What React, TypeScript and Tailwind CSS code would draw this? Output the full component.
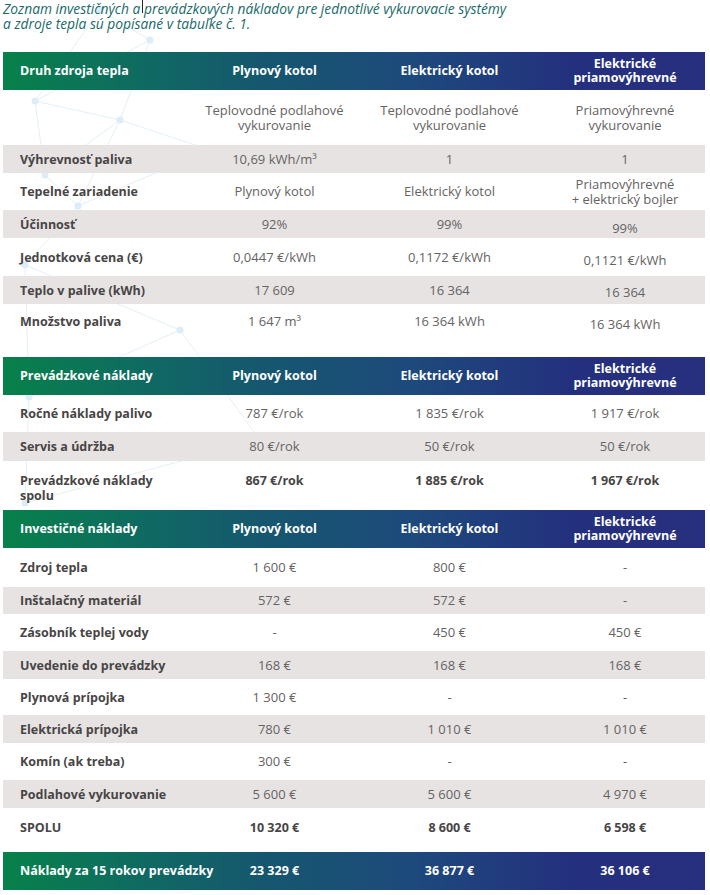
import React from "react";

type Row = {
  label: string;
  cells: string[];
  gray?: boolean;
  h: number;
  bold?: boolean;
  top?: boolean;
  offsets?: number[];
};

type Section = {
  title: string;
  headerMt?: number;
  rows: Row[];
};

const heads = ["Plynový kotol", "Elektrický kotol", "Elektrické\npriamovýhrevné"];

const sections: Section[] = [
  {
    title: "Druh zdroja tepla",
    rows: [
      {
        label: "",
        cells: [
          "Teplovodné podlahové\nvykurovanie",
          "Teplovodné podlahové\nvykurovanie",
          "Priamovýhrevné\nvykurovanie",
        ],
        h: 55,
      },
      { label: "Výhrevnosť paliva", cells: ["10,69 kWh/m³", "1", "1"], gray: true, h: 28 },
      {
        label: "Tepelné zariadenie",
        cells: ["Plynový kotol", "Elektrický kotol", "Priamovýhrevné\n+ elektrický bojler"],
        h: 37,
      },
      { label: "Účinnosť", cells: ["92%", "99%", "99%"], gray: true, h: 28, offsets: [0, 0, 4] },
      {
        label: "Jednotková cena (€)",
        cells: ["0,0447 €/kWh", "0,1172 €/kWh", "0,1121 €/kWh"],
        h: 38,
        offsets: [0, 0, 3],
      },
      { label: "Teplo v palive (kWh)", cells: ["17 609", "16 364", "16 364"], gray: true, h: 28, offsets: [0, 0, 2] },
      {
        label: "Množstvo paliva",
        cells: ["1 647 m³", "16 364 kWh", "16 364 kWh"],
        h: 34,
        offsets: [0, 0, 3],
      },
    ],
  },
  {
    title: "Prevádzkové náklady",
    headerMt: 19,
    rows: [
      { label: "Ročné náklady palivo", cells: ["787 €/rok", "1 835 €/rok", "1 917 €/rok"], h: 37 },
      { label: "Servis a údržba", cells: ["80 €/rok", "50 €/rok", "50 €/rok"], gray: true, h: 29 },
      {
        label: "Prevádzkové náklady\nspolu",
        cells: ["867 €/rok", "1 885 €/rok", "1 967 €/rok"],
        h: 49,
        bold: true,
        top: true,
      },
    ],
  },
  {
    title: "Investičné náklady",
    rows: [
      { label: "Zdroj tepla", cells: ["1 600 €", "800 €", "-"], h: 39 },
      { label: "Inštalačný materiál", cells: ["572 €", "572 €", "-"], gray: true, h: 27 },
      { label: "Zásobník teplej vody", cells: ["-", "450 €", "450 €"], h: 37 },
      { label: "Uvedenie do prevádzky", cells: ["168 €", "168 €", "168 €"], gray: true, h: 28 },
      { label: "Plynová prípojka", cells: ["1 300 €", "-", "-"], h: 36 },
      { label: "Elektrická prípojka", cells: ["780 €", "1 010 €", "1 010 €"], gray: true, h: 28 },
      { label: "Komín (ak treba)", cells: ["300 €", "-", "-"], h: 37 },
      { label: "Podlahové vykurovanie", cells: ["5 600 €", "5 600 €", "4 970 €"], gray: true, h: 28 },
      { label: "SPOLU", cells: ["10 320 €", "8 600 €", "6 598 €"], h: 44, bold: true, top: true },
    ],
  },
];

const grid = "grid grid-cols-[184px_175px_175px_168px]";
const headBg =
  "bg-[linear-gradient(90deg,#07814a_0%,#0f6a62_20%,#16566f_38%,#1d4a7c_58%,#242f7e_82%,#27307f_100%)]";

function HeaderRow({ title, cells, mt }: { title: string; cells: string[]; mt?: number }) {
  return (
    <div
      className={`${grid} ${headBg} h-[38px] items-center text-[12.5px] font-bold leading-[14px] text-white`}
      style={mt ? { marginTop: mt } : undefined}
    >
      <div className="pl-[17px]">{title}</div>
      {cells.map((c, i) => (
        <div key={i} className={`whitespace-pre-line text-center ${i === 2 ? "pl-[8px]" : ""}`}>
          {c}
        </div>
      ))}
    </div>
  );
}

function DataRow({ row }: { row: Row }) {
  return (
    <div
      className={`${grid} ${row.gray ? "bg-[#e7e3e3]" : ""} ${row.top ? "items-start pt-[12px]" : "items-center"} leading-[15px]`}
      style={{ height: row.h }}
    >
      <div className="whitespace-pre-line pl-[17px] text-[12.5px] font-bold text-[#474545]">{row.label}</div>
      {row.cells.map((c, i) => (
        <div
          key={i}
          className={`whitespace-pre-line text-center ${row.bold ? "text-[12.5px] font-bold text-[#474545]" : "text-[13px] font-normal text-[#656363]"} ${i === 2 ? "pl-[8px]" : ""}`}
          style={row.offsets && row.offsets[i] ? { marginTop: row.offsets[i] * 2 } : undefined}
        >
          {c}
        </div>
      ))}
    </div>
  );
}

function Mesh() {
  const pts: [number, number][] = [
    [35, 101],
    [120, 120],
    [45, 175],
    [78, 206],
    [25, 265],
    [29, 397],
    [25, 503],
    [150, 40],
    [100, 10],
    [210, 150],
    [180, 330],
    [260, 440],
  ];
  const lines: [number, number][] = [
    [0, 1],
    [0, 2],
    [1, 2],
    [2, 3],
    [1, 3],
    [3, 4],
    [4, 5],
    [5, 6],
    [0, 7],
    [7, 8],
    [8, 0],
    [1, 9],
    [3, 9],
    [4, 10],
    [5, 10],
    [10, 11],
    [6, 11],
    [1, 7],
  ];
  return (
    <svg className="pointer-events-none absolute left-0 top-0" width="360" height="560">
      {lines.map(([a, b], i) => (
        <line
          key={i}
          x1={pts[a][0]}
          y1={pts[a][1]}
          x2={pts[b][0]}
          y2={pts[b][1]}
          stroke="#e2f0f7"
          strokeWidth="1"
        />
      ))}
      {pts.map(([x, y], i) => (
        <circle key={i} cx={x} cy={y} r="3.5" fill="#dcedf7" />
      ))}
    </svg>
  );
}

export default function App() {
  return (
    <div className="relative h-[895px] w-[710px] overflow-hidden bg-white font-['Open_Sans',sans-serif]">
      <Mesh />
      <div className="relative">
        <p className="pl-[3px] pt-[1px] text-[13.8px] italic leading-[15px] text-[#196a68]">
          Zoznam investičných a{" "}
          <span className="relative">
            <span className="absolute -left-[2px] top-[1px] h-[13px] w-px bg-[#222]" />
            prevádzkových
          </span>{" "}
          nákladov pre jednotlivé vykurovacie systémy
          <br />a zdroje tepla sú popísané v tabuľke č. 1.
        </p>
        <div className="ml-[3px] mt-[21px] w-[702px] overflow-hidden">
          {sections.map((s, si) => (
            <div key={si}>
              <HeaderRow title={s.title} cells={heads} mt={s.headerMt} />
              {s.rows.map((r, ri) => (
                <DataRow key={ri} row={r} />
              ))}
            </div>
          ))}
          <div className={`${grid} ${headBg} h-[38px] items-center text-[12.5px] font-bold text-white`}>
            <div className="whitespace-nowrap pl-[17px]">Náklady za 15 rokov prevádzky</div>
            <div className="text-center">23 329 €</div>
            <div className="text-center">36 877 €</div>
            <div className="pl-[8px] text-center">36 106 €</div>
          </div>
        </div>
      </div>
    </div>
  );
}
